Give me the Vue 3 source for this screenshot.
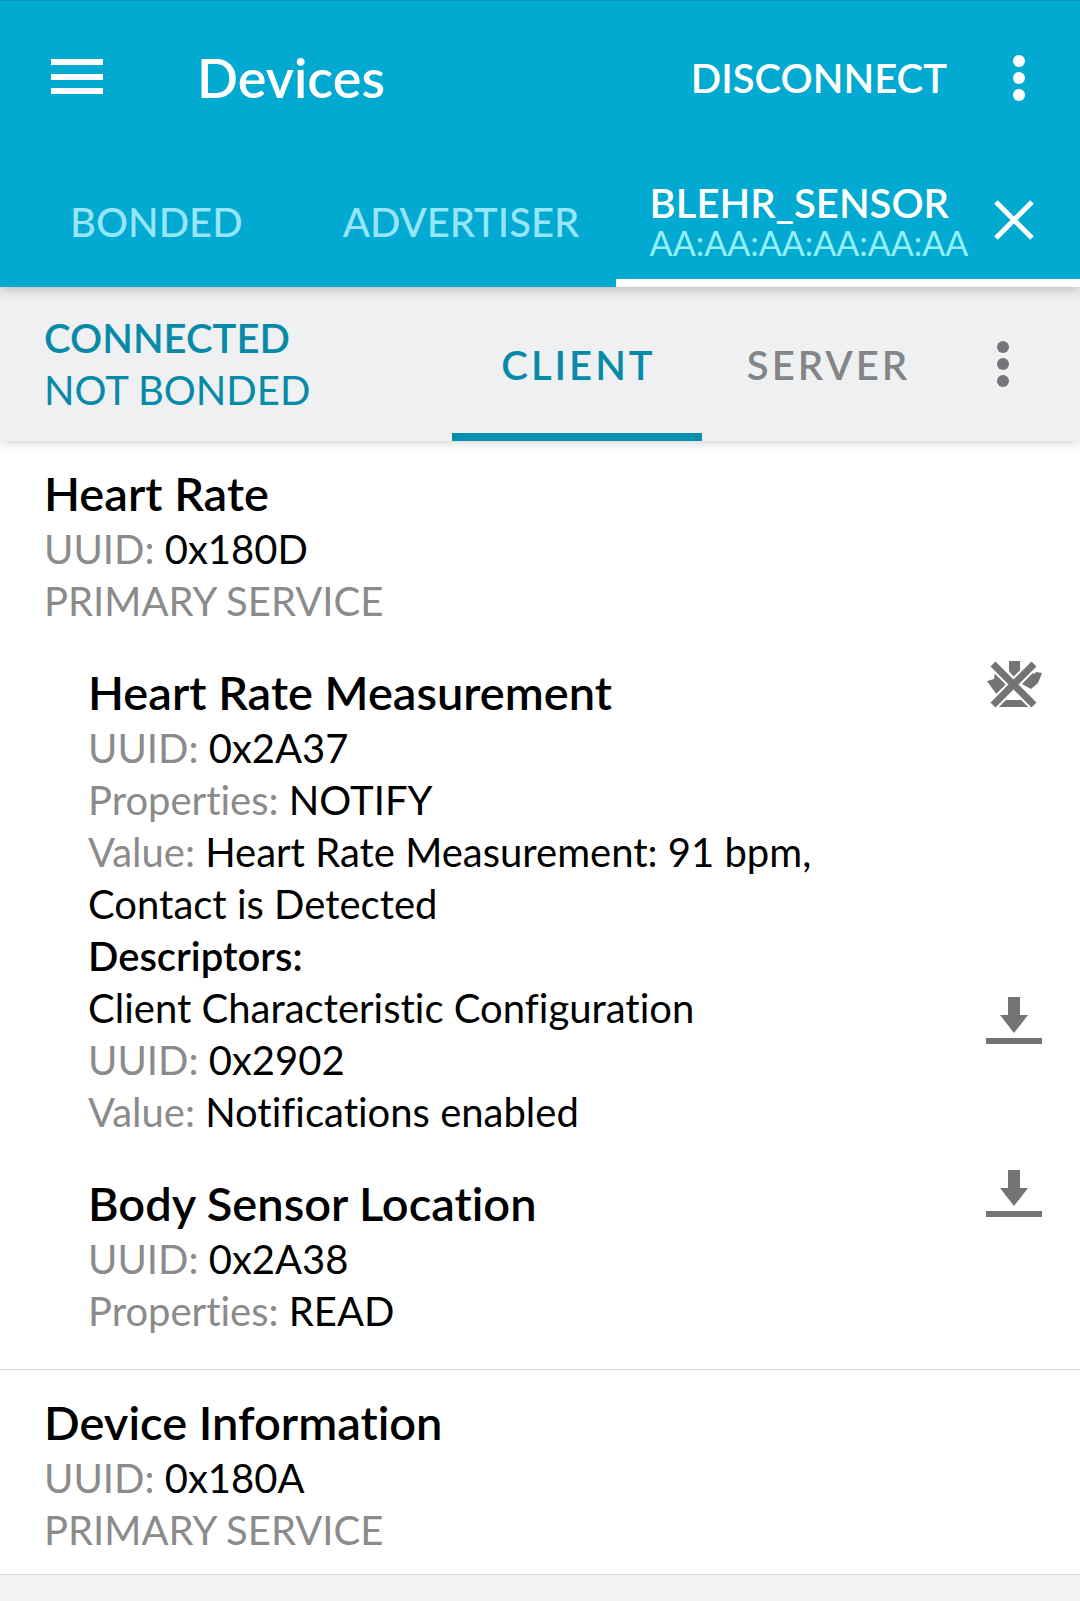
<script setup>
import { ref } from 'vue'

const deviceTab = ref('sensor')
const roleTab = ref('client')

const services = [
  {
    name: 'Heart Rate',
    uuid: '0x180D',
    type: 'PRIMARY SERVICE',
    characteristics: [
      {
        name: 'Heart Rate Measurement',
        action: 'notify',
        fields: [
          { label: 'UUID:', value: '0x2A37' },
          { label: 'Properties:', value: 'NOTIFY' },
          { label: 'Value:', value: 'Heart Rate Measurement: 91 bpm, Contact is Detected' },
        ],
        descriptors: [
          {
            name: 'Client Characteristic Configuration',
            fields: [
              { label: 'UUID:', value: '0x2902' },
              { label: 'Value:', value: 'Notifications enabled' },
            ],
          },
        ],
      },
      {
        name: 'Body Sensor Location',
        action: 'read',
        fields: [
          { label: 'UUID:', value: '0x2A38' },
          { label: 'Properties:', value: 'READ' },
        ],
        descriptors: [],
      },
    ],
  },
  { name: 'Device Information', uuid: '0x180A', type: 'PRIMARY SERVICE', characteristics: [] },
]
</script>

<template>
  <div class="app">
    <header class="top">
      <div class="toolbar">
        <button class="icon menu" aria-label="Menu">
          <svg width="52" height="38" viewBox="0 0 52 38"><path d="M0 0h52v6H0zM0 15h52v6H0zM0 29h52v6H0z" fill="currentColor" /></svg>
        </button>
        <h1>Devices</h1>
        <button class="disconnect">DISCONNECT</button>
        <button class="icon more" aria-label="More options">
          <svg width="12" height="46" viewBox="0 0 12 46" fill="currentColor"><circle cx="6" cy="6" r="6" /><circle cx="6" cy="23" r="6" /><circle cx="6" cy="40" r="6" /></svg>
        </button>
      </div>
      <nav class="device-tabs">
        <button class="tab bonded" @click="deviceTab = 'bonded'">BONDED</button>
        <button class="tab advertiser" @click="deviceTab = 'advertiser'">ADVERTISER</button>
        <div class="tab sensor" :class="{ active: deviceTab === 'sensor' }">
          <button class="sensor-name" @click="deviceTab = 'sensor'">
            <span class="name">BLEHR_SENSOR</span>
            <span class="address">AA:AA:AA:AA:AA:AA</span>
          </button>
          <button class="icon" aria-label="Close tab">
            <svg width="40" height="40" viewBox="0 0 40 40"><path d="M2 2l36 36M38 2L2 38" stroke="currentColor" stroke-width="5" /></svg>
          </button>
        </div>
      </nav>
    </header>

    <section class="status">
      <div class="state">
        <strong>CONNECTED</strong>
        <span>NOT BONDED</span>
      </div>
      <button class="role" :class="{ active: roleTab === 'client' }" @click="roleTab = 'client'">CLIENT</button>
      <button class="role" :class="{ active: roleTab === 'server' }" @click="roleTab = 'server'">SERVER</button>
      <button class="icon more" aria-label="Connection options">
        <svg width="12" height="46" viewBox="0 0 12 46" fill="currentColor"><circle cx="6" cy="6" r="6" /><circle cx="6" cy="23" r="6" /><circle cx="6" cy="40" r="6" /></svg>
      </button>
    </section>

    <main>
      <section v-for="s in services" :key="s.uuid" class="service">
        <h2>{{ s.name }}</h2>
        <p><span class="label">UUID:</span> {{ s.uuid }}</p>
        <p class="label">{{ s.type }}</p>

        <article v-for="c in s.characteristics" :key="c.name" class="characteristic">
          <div class="row">
            <div class="text">
              <h2>{{ c.name }}</h2>
              <p v-for="f in c.fields" :key="f.label"><span class="label">{{ f.label }}</span> {{ f.value }}</p>
            </div>
            <button v-if="c.action === 'notify'" class="icon action" aria-label="Stop notifications">
              <svg width="56" height="56" viewBox="0 0 56 56" fill="currentColor">
                <path d="M23 5h11v10l-6 6-5-6zM1 25l7-2 1-7 13 11-11 12zM56 17l-6-1-2 2-3-2-9 12 9 5 7-6zM17 44h21l6 7H11z" />
                <path d="M7 8l41 41M48 8L7 49" stroke="#fff" stroke-width="11" />
                <path d="M7 8l41 41M48 8L7 49" stroke="currentColor" stroke-width="7" />
              </svg>
            </button>
            <button v-else class="icon action" aria-label="Read characteristic">
              <svg width="56" height="56" viewBox="0 0 56 56" fill="currentColor"><path d="M22 3h12v18h8L28 39 14 21h8zM0 44h56v6H0z" /></svg>
            </button>
          </div>
          <p v-if="c.descriptors.length" class="caption">Descriptors:</p>
          <div v-for="d in c.descriptors" :key="d.name" class="row descriptor">
            <div class="text">
              <p>{{ d.name }}</p>
              <p v-for="f in d.fields" :key="f.label"><span class="label">{{ f.label }}</span> {{ f.value }}</p>
            </div>
            <button class="icon action" aria-label="Read descriptor">
              <svg width="56" height="56" viewBox="0 0 56 56" fill="currentColor"><path d="M22 3h12v18h8L28 39 14 21h8zM0 44h56v6H0z" /></svg>
            </button>
          </div>
        </article>
      </section>
    </main>
  </div>
</template>

<style>
body {
  margin: 0;
  background: #f4f4f4;
}
</style>

<style scoped>
.app {
  font-family: Lato, "Open Sans", sans-serif;
  font-size: 40px;
  line-height: 52px;
  font-variant-ligatures: none;
  color: #000;
}
h1,
h2,
p {
  margin: 0;
}
button {
  margin: 0;
  padding: 0;
  border: 0;
  background: none;
  font: inherit;
  color: inherit;
  text-align: left;
  cursor: pointer;
}
.icon {
  display: flex;
  flex: none;
}
svg {
  display: block;
}
.top {
  position: relative;
  z-index: 2;
  background: #02a9d0;
  color: #fff;
  box-shadow: 0 2px 12px rgba(0, 0, 0, 0.25);
}
.toolbar {
  display: flex;
  align-items: center;
  height: 156px;
  padding: 0 55px 0 51px;
  box-sizing: border-box;
  box-shadow: inset 0 1px #0595b8;
}
h1 {
  flex: 1;
  margin-left: 94px;
  font-size: 54px;
  font-weight: 600;
}
.disconnect {
  margin-right: 66px;
  font-weight: 600;
}
.device-tabs {
  display: flex;
  height: 131px;
}
.tab {
  font-weight: 500;
  color: #95e6fb;
}
.bonded {
  padding-left: 70px;
  padding-right: 48px;
}
.advertiser {
  padding-left: 52px;
}
.sensor {
  display: flex;
  align-items: center;
  width: 43%;
  margin-left: auto;
  padding: 4px 46px 0 34px;
  box-sizing: border-box;
  border-bottom: 8px solid transparent;
}
.sensor-name {
  flex: 1;
  padding-top: 6px;
}
.sensor.active {
  border-color: #fff;
  color: #fff;
}
.name,
.address {
  display: block;
  line-height: 40px;
}
.name {
  font-weight: 600;
}
.address {
  font-size: 34px;
  font-weight: 400;
  color: #95f0fd;
}
.status {
  position: relative;
  z-index: 1;
  display: flex;
  height: 154px;
  padding-right: 71px;
  background: #eef0f2;
  color: #068aa8;
  box-shadow: 0 1px 10px rgba(0, 0, 0, 0.2);
}
.state {
  display: flex;
  flex: 1;
  flex-direction: column;
  justify-content: center;
  padding-left: 44px;
}
.state strong {
  font-weight: 600;
}
.role {
  width: 250px;
  padding: 10px 0 0 3px;
  border-bottom: 8px solid transparent;
  font-weight: 600;
  letter-spacing: 3px;
  text-align: center;
  color: #838587;
}
.role.active {
  border-color: #048fac;
  color: #068aa8;
}
.status .more {
  align-items: center;
  margin-left: 45px;
  color: #757679;
}
.service {
  padding: 22px 38px 18px 44px;
  border-bottom: 1px solid #dadcdc;
  background: #fff;
}
.service:has(.characteristic) {
  padding-bottom: 32px;
}
h2 {
  font-size: 47px;
  font-weight: 600;
  line-height: 60px;
}
.label {
  color: #8b8b8b;
}
.characteristic {
  margin-top: 29px;
  padding-left: 44px;
}
.row {
  display: flex;
  gap: 110px;
}
.text {
  flex: 1;
  padding-top: 6px;
}
.descriptor .text {
  padding-top: 0;
}
.action {
  align-self: flex-start;
  color: #747474;
}
.descriptor .action {
  margin-top: 12px;
}
.caption {
  font-weight: 600;
}
</style>
